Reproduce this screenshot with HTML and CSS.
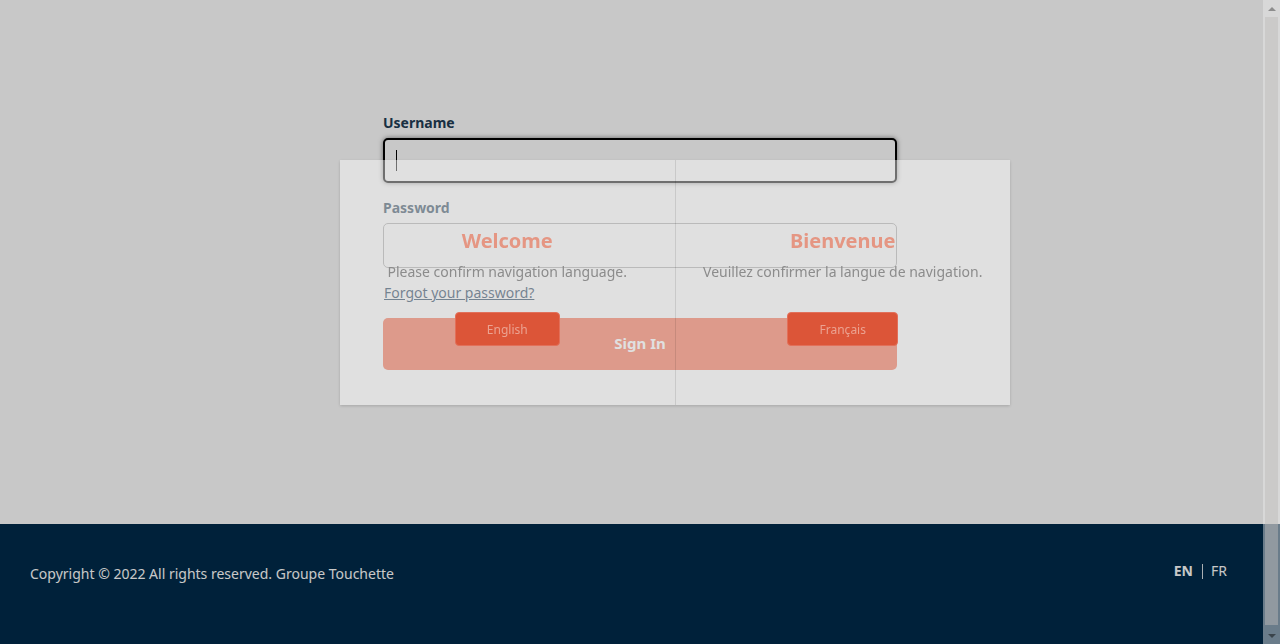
FILE: index.html
```html
<!DOCTYPE html>
<html lang="en">
<head>
<meta charset="utf-8">
<title>Sign In</title>
<link rel="stylesheet" href="styles.css">
</head>
<body>
<div class="page">
  <main class="main">
    <form class="login">
      <label class="label" for="username">Username</label>
      <div class="field focused">
        <input class="input input-focus" id="username" type="text">
        <span class="caret"></span>
      </div>
      <label class="label label-gap" for="password">Password</label>
      <div class="field">
        <input class="input" id="password" type="password">
      </div>
      <a class="forgot" href="#">Forgot your password?</a>
      <button class="signin" type="button">Sign In</button>
    </form>
  </main>
  <footer class="footer">
    <p class="copyright">Copyright © 2022 All rights reserved. Groupe Touchette</p>
    <nav class="langs">
      <a class="lang lang-active" href="#">EN</a>
      <span class="lang-sep"></span>
      <a class="lang" href="#">FR</a>
    </nav>
  </footer>
</div>

<div class="backdrop"></div>

<div class="modal" role="dialog">
  <section class="modal-col modal-col-left">
    <h2 class="modal-title">Welcome</h2>
    <p class="modal-text">Please confirm navigation language.</p>
    <button class="modal-btn btn-en" type="button">English</button>
  </section>
  <section class="modal-col">
    <h2 class="modal-title">Bienvenue</h2>
    <p class="modal-text">Veuillez confirmer la langue de navigation.</p>
    <button class="modal-btn btn-fr" type="button">Français</button>
  </section>
</div>

<div class="scrollbar" aria-hidden="true">
  <div class="sb-btn"><span class="sb-up"></span></div>
  <div class="sb-thumb"></div>
  <div class="sb-btn"><span class="sb-down"></span></div>
</div>
</body>
</html>
```

FILE: styles.css
```css
html, body {
  margin: 0;
  padding: 0;
  height: 100%;
  overflow: hidden;
}

body {
  background: #ffffff;
  font-family: "Noto Sans", "Open Sans", "Liberation Sans", sans-serif;
  font-size: 14px;
  color: #223d55;
}

.page {
  display: flex;
  flex-direction: column;
  width: 1280px;
}

.main {
  height: 524px;
  box-sizing: border-box;
  padding-top: 113px;
  display: flex;
  justify-content: center;
}

.login {
  width: 514px;
  display: flex;
  flex-direction: column;
}

.label {
  font-weight: 700;
  font-size: 14px;
  line-height: 20px;
  color: #223d55;
  margin-bottom: 5px;
}

.label-gap {
  margin-top: 15px;
}

.field {
  position: relative;
  height: 45px;
}

.input {
  box-sizing: border-box;
  width: 100%;
  height: 45px;
  margin: 0;
  border: 1px solid #aaaaaa;
  border-radius: 5px;
  background: #ffffff;
  outline: none;
  font: inherit;
}

.input-focus {
  border: 2px solid #000000;
  box-shadow: 0 0 5px rgba(0, 0, 0, 0.5);
}

.caret {
  position: absolute;
  left: 13px;
  top: 12px;
  width: 1px;
  height: 21px;
  background: #000000;
}

.forgot {
  margin-top: 15px;
  margin-left: 1px;
  align-self: flex-start;
  font-size: 14px;
  line-height: 20px;
  color: #0a2d4d;
  text-decoration: underline;
}

.signin {
  margin-top: 15px;
  height: 52px;
  border: none;
  border-radius: 5px;
  background: #f8613f;
  color: #ffffff;
  font-family: inherit;
  font-weight: 700;
  font-size: 15px;
  padding: 0 0 2px;
}

.footer {
  height: 136px;
  box-sizing: border-box;
  background: #002b4a;
  display: flex;
  justify-content: space-between;
  align-items: flex-start;
  padding: 40px 53px 0 30px;
}

.copyright {
  margin: 0;
  font-size: 14px;
  line-height: 20px;
  color: #ffffff;
}

.langs {
  display: flex;
  align-items: center;
  margin-top: -3px;
  height: 20px;
}

.lang {
  color: #ffffff;
  text-decoration: none;
  font-size: 14px;
  line-height: 20px;
}

.lang-active {
  font-weight: 700;
}

.lang-sep {
  width: 1px;
  height: 15px;
  background: rgba(255, 255, 255, 0.85);
  margin: 0 8px 0 9px;
}

.backdrop {
  position: fixed;
  inset: 0;
  background: rgba(0, 0, 0, 0.216);
}

.modal {
  position: fixed;
  left: 340px;
  top: 160px;
  width: 670px;
  height: 245px;
  display: flex;
  background: rgba(255, 255, 255, 0.436);
  box-shadow: 0 1px 3px rgba(0, 0, 0, 0.18);
}

.modal-col {
  flex: 1;
  display: flex;
  flex-direction: column;
  align-items: center;
  padding-top: 68px;
}

.modal-col-left {
  border-right: 1px solid rgba(0, 0, 0, 0.1);
}

.modal-title {
  margin: 0;
  font-size: 20px;
  line-height: 26px;
  font-weight: 700;
  color: #e59683;
}

.modal-text {
  margin: 8px 0 0;
  font-size: 14px;
  line-height: 20px;
  color: #8c8c8c;
}

.modal-btn {
  margin-top: 30px;
  height: 34px;
  border: 1px solid #e2705a;
  border-radius: 4px;
  background: #dc5538;
  color: #eba291;
  font-family: inherit;
  font-size: 12px;
  padding: 0;
}

.btn-en {
  width: 105px;
}

.btn-fr {
  width: 111px;
}

.scrollbar {
  position: fixed;
  top: 0;
  right: 0;
  bottom: 0;
  width: 17px;
  display: flex;
  flex-direction: column;
  background: rgba(236, 236, 236, 0.45);
}

.sb-btn {
  height: 17px;
  display: flex;
  align-items: center;
  justify-content: center;
}

.sb-thumb {
  flex: 1;
  margin: 0 2px 2px;
  background: rgba(190, 188, 185, 0.47);
}

.sb-up, .sb-down {
  width: 0;
  height: 0;
  border-left: 4px solid transparent;
  border-right: 4px solid transparent;
}

.sb-up {
  border-bottom: 4px solid rgba(0, 0, 0, 0.35);
}

.sb-down {
  border-top: 4px solid rgba(0, 0, 0, 0.45);
}
```
